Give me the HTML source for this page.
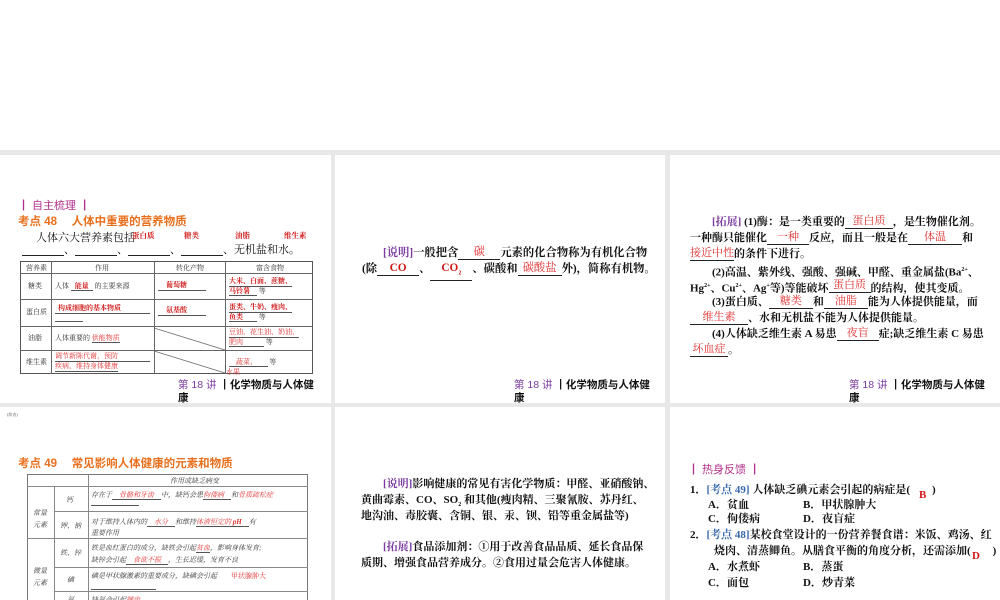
<!DOCTYPE html>
<html><head><meta charset="utf-8">
<style>
*{margin:0;padding:0;box-sizing:border-box}
body{width:1000px;height:600px;background:#fff;position:relative;overflow:hidden;font-family:"Liberation Serif","Noto Serif CJK SC",serif;color:#111}
.gray{position:absolute;background:#e8e8e8}
.s{position:absolute;background:#fff;overflow:hidden}
.a{position:absolute;white-space:nowrap}
.b{font-weight:bold}
.r{color:#e03030}
.rb{color:#d01818;font-weight:bold}
.pu{color:#7a3aa0}
.mg{color:#b0308c;font-family:"Liberation Sans","Noto Sans CJK SC",sans-serif}
.or{color:#e8701e;font-family:"Liberation Sans","Noto Sans CJK SC",sans-serif;font-weight:bold}
.t{font-size:11px;font-weight:bold;line-height:16px}
.u{display:inline-block;border-bottom:1px solid #222;text-align:center;line-height:14px;vertical-align:top}
.ft{font-size:10.5px;font-weight:bold;font-family:"Liberation Sans","Noto Sans CJK SC",sans-serif;line-height:13px}
.ln{position:absolute;background:#666}
.sm{font-size:7px;color:#333}
.ru{border-bottom:1px solid #555}
</style></head><body>
<div class="gray" style="left:0;top:150px;width:1000px;height:450px"></div>

<!-- slide 1 -->
<div class="s" style="left:0;top:155px;width:331px;height:248px">
 <div class="a mg" style="left:18px;top:42px;font-size:11px">┃ 自主梳理 ┃</div>
 <div class="a or" style="left:18px;top:58px;font-size:11.5px">考点 48　 人体中重要的营养物质</div>
 <div class="a" style="left:36px;top:74px;font-size:11px">人体六大营养素包括</div>
 <div class="a rb" style="left:132px;top:75px;font-size:7.5px">蛋白质</div>
 <div class="a rb" style="left:184px;top:75px;font-size:7.5px">糖类</div>
 <div class="a rb" style="left:235px;top:75px;font-size:7.5px">油脂</div>
 <div class="a rb" style="left:284px;top:75px;font-size:7.5px">维生素</div>
 <div class="a" style="left:22px;top:86px;font-size:11px"><span class="u" style="width:42px">&nbsp;</span>、<span class="u" style="width:42px">&nbsp;</span>、<span class="u" style="width:42px">&nbsp;</span>、<span class="u" style="width:42px">&nbsp;</span>、无机盐和水。</div>
 <div style="position:absolute;left:20px;top:106px;width:293px;height:113px;border:1px solid #555"></div>
 <div class="ln" style="left:51px;top:106px;width:1px;height:113px"></div>
 <div class="ln" style="left:154px;top:106px;width:1px;height:113px"></div>
 <div class="ln" style="left:225px;top:106px;width:1px;height:113px"></div>
 <div class="ln" style="left:20px;top:118px;width:293px;height:1px"></div>
 <div class="ln" style="left:20px;top:144px;width:293px;height:1px"></div>
 <div class="ln" style="left:20px;top:171px;width:293px;height:1px"></div>
 <div class="ln" style="left:20px;top:195px;width:293px;height:1px"></div>
 <svg style="position:absolute;left:154px;top:171px" width="72" height="48"><line x1="0" y1="2" x2="71" y2="24" stroke="#666" stroke-width=".7"/><line x1="0" y1="25" x2="71" y2="47" stroke="#666" stroke-width=".7"/></svg>
 <div class="a sm" style="left:26px;top:108px">营养素</div>
 <div class="a sm" style="left:95px;top:108px">作用</div>
 <div class="a sm" style="left:176px;top:108px">转化产物</div>
 <div class="a sm" style="left:256px;top:108px">富含食物</div>
 <div class="a sm" style="left:28px;top:126px">糖类</div>
 <div class="a sm" style="left:26px;top:152px">蛋白质</div>
 <div class="a sm" style="left:28px;top:178px">油脂</div>
 <div class="a sm" style="left:26px;top:202px">维生素</div>
 <div class="a sm" style="left:55px;top:126px">人体 <span class="ru rb" style="padding:0 4px">能量</span> 的主要来源</div>
 <div class="a rb" style="left:158px;top:125px;font-size:7px;border-bottom:1px solid #555;width:48px;padding-left:8px">葡萄糖</div>
 <div class="a rb" style="left:229px;top:121px;font-size:7px;border-bottom:1px solid #555">大米、白面、蔗糖、</div>
 <div class="a sm" style="left:229px;top:131px"><span class="rb ru">马铃薯　</span> 等</div>
 <div class="a rb" style="left:55px;top:148px;font-size:7px;border-bottom:1px solid #555;width:95px;padding-left:3px">构成细胞的基本物质</div>
 <div class="a" style="left:55px;top:159px;width:28px;border-bottom:1px solid #555;height:8px"></div>
 <div class="a rb" style="left:158px;top:150px;font-size:7px;border-bottom:1px solid #555;width:48px;padding-left:8px">氨基酸</div>
 <div class="a rb" style="left:229px;top:147px;font-size:7px;border-bottom:1px solid #555">蛋类、牛奶、瘦肉、</div>
 <div class="a sm" style="left:229px;top:157px"><span class="rb ru">鱼类　　</span> 等</div>
 <div class="a sm" style="left:55px;top:178px">人体重要的 <span class="r ru">供能物质</span></div>
 <div class="a r" style="left:229px;top:172px;font-size:7px;border-bottom:1px solid #555">豆油、花生油、奶油、</div>
 <div class="a sm" style="left:229px;top:182px"><span class="r ru">肥肉　　　</span> 等</div>
 <div class="a r" style="left:55px;top:196px;font-size:7px;border-bottom:1px solid #555;width:95px">调节新陈代谢，预防</div>
 <div class="a r" style="left:55px;top:206px;font-size:7px;border-bottom:1px solid #555">疾病，维持身体健康</div>
 <div class="a sm" style="left:229px;top:202px"><span class="r ru">　蔬菜、　　</span> 等</div>
 <div class="a r" style="left:226px;top:212px;font-size:7px">水果</div>
 <div class="a ft" style="left:178px;top:224px"><span class="pu" style="font-weight:normal">第 18 讲</span> ┃化学物质与人体健<br>康</div>
</div>

<!-- slide 2 -->
<div class="s" style="left:335px;top:155px;width:330px;height:248px">
 <div class="a t" style="left:48px;top:90px;font-size:11.3px"><span class="pu">[说明]</span>一般把含<span class="u r" style="width:42px;font-weight:normal">碳</span>元素的化合物称为有机化合物</div>
 <div class="a t" style="left:27px;top:106px;font-size:11.3px">(除<span class="u rb" style="width:42px">CO</span>、<span class="u rb" style="width:42px">CO<sub style="font-size:6px">2</sub></span>、碳酸和<span class="u r" style="width:44px;font-weight:normal">碳酸盐</span>外)，简称有机物。</div>
 <div class="a ft" style="left:179px;top:224px"><span class="pu" style="font-weight:normal">第 18 讲</span> ┃化学物质与人体健<br>康</div>
</div>

<!-- slide 3 -->
<div class="s" style="left:670px;top:155px;width:330px;height:248px">
 <div class="a t" style="left:42px;top:59px"><span class="pu">[拓展]</span> (1)酶：是一类重要的<span class="u r" style="width:48px;font-weight:normal">蛋白质</span>，是生物催化剂。</div>
 <div class="a t" style="left:20px;top:75px">一种酶只能催化<span class="u r" style="width:42px;font-weight:normal">一种</span>反应，而且一般是在<span class="u r" style="width:54px;font-weight:normal">体温</span>和</div>
 <div class="a t" style="left:20px;top:91px"><span class="u r" style="font-weight:normal">接近中性</span>的条件下进行。</div>
 <div class="a t" style="left:42px;top:107px">(2)高温、紫外线、强酸、强碱、甲醛、重金属盐(Ba<sup style="font-size:6px">2+</sup>、</div>
 <div class="a t" style="left:20px;top:123px">Hg<sup style="font-size:6px">2+</sup>、Cu<sup style="font-size:6px">2+</sup>、Ag<sup style="font-size:6px">+</sup>等)等能破坏<span class="u r" style="width:42px;font-weight:normal">蛋白质</span>的结构，使其变质。</div>
 <div class="a t" style="left:42px;top:139px">(3)蛋白质、<span class="u r" style="width:44px;font-weight:normal">糖类</span>和<span class="u r" style="width:44px;font-weight:normal">油脂</span>能为人体提供能量，而</div>
 <div class="a t" style="left:20px;top:155px"><span class="u r" style="width:58px;font-weight:normal">维生素</span>、水和无机盐不能为人体提供能量。</div>
 <div class="a t" style="left:42px;top:171px">(4)人体缺乏维生素 A 易患<span class="u r" style="width:42px;font-weight:normal">夜盲</span>症;缺乏维生素 C 易患</div>
 <div class="a t" style="left:20px;top:187px"><span class="u r" style="width:38px;font-weight:normal">坏血症</span>。</div>
 <div class="a ft" style="left:179px;top:224px"><span class="pu" style="font-weight:normal">第 18 讲</span> ┃化学物质与人体健<br>康</div>
</div>

<!-- slide 4 -->
<div class="s" style="left:0;top:407px;width:331px;height:193px">
 <div class="a" style="left:7px;top:5px;font-size:4px;color:#555">(续表)</div>
 <div class="a or" style="left:18px;top:48px;font-size:11.5px">考点 49　 常见影响人体健康的元素和物质</div>
 <div style="position:absolute;left:27px;top:67px;width:281px;height:140px;border:1px solid #777"></div>
 <div class="ln" style="left:54px;top:79px;width:1px;height:120px;background:#888"></div>
 <div class="ln" style="left:88px;top:67px;width:1px;height:130px;background:#888"></div>
 <div class="ln" style="left:27px;top:79px;width:281px;height:1px;background:#888"></div>
 <div class="ln" style="left:54px;top:104px;width:254px;height:1px;background:#888"></div>
 <div class="ln" style="left:27px;top:131px;width:281px;height:1px;background:#888"></div>
 <div class="ln" style="left:54px;top:160px;width:254px;height:1px;background:#888"></div>
 <div class="ln" style="left:54px;top:184px;width:254px;height:1px;background:#888"></div>
 <div class="a sm" style="left:170px;top:69px;font-style:italic">作用或缺乏病变</div>
 <div class="a sm" style="left:33px;top:100px;font-style:italic;line-height:12px">常量<br>元素</div>
 <div class="a sm" style="left:33px;top:158px;font-style:italic;line-height:12px">微量<br>元素</div>
 <div class="a sm" style="left:66px;top:88px;font-style:italic">钙</div>
 <div class="a sm" style="left:60px;top:114px;font-style:italic">钾、钠</div>
 <div class="a sm" style="left:60px;top:141px;font-style:italic">铁、锌</div>
 <div class="a sm" style="left:67px;top:168px;font-style:italic">碘</div>
 <div class="a sm" style="left:67px;top:188px;font-style:italic">氟</div>
 <div class="a sm" style="left:91px;top:83px;font-style:italic">存在于<span class="r ru">　骨骼和牙齿　</span>中，缺钙会患<span class="r ru">佝偻病　</span>和<span class="r">骨质疏松症</span></div>
 <div class="a" style="left:91px;top:91px;width:48px;border-bottom:1px solid #555;height:8px"></div>
 <div class="a sm" style="left:91px;top:110px;font-style:italic">对于维持人体内的<span class="r ru">　水分　</span>和维持<span class="r ru">体液恒定的 <b>pH</b>　</span>有</div>
 <div class="a sm" style="left:91px;top:121px;font-style:italic">重要作用</div>
 <div class="a sm" style="left:91px;top:136px;font-style:italic">铁是血红蛋白的成分，缺铁会引起<span class="r ru">贫血</span>，影响身体发育;</div>
 <div class="a sm" style="left:91px;top:148px;font-style:italic">缺锌会引起<span class="r ru">　食欲不振　</span>，生长迟缓，发育不良</div>
 <div class="a sm" style="left:91px;top:164px;font-style:italic">碘是甲状腺激素的重要成分，缺碘会引起　　<span class="r" style="font-style:normal">甲状腺肿大</span></div>
 <div class="a" style="left:91px;top:175px;width:65px;border-bottom:1px solid #555;height:8px"></div>
 <div class="a sm" style="left:91px;top:188px;font-style:italic">缺氟会引起<span class="r">龋齿</span></div>
</div>

<!-- slide 5 -->
<div class="s" style="left:335px;top:407px;width:330px;height:193px">
 <div class="a t" style="left:48px;top:69px"><span class="pu">[说明]</span>影响健康的常见有害化学物质：甲醛、亚硝酸钠、</div>
 <div class="a t" style="left:26px;top:85px">黄曲霉素、CO、SO<sub style="font-size:6px">2</sub> 和其他(瘦肉精、三聚氰胺、苏丹红、</div>
 <div class="a t" style="left:26px;top:101px">地沟油、毒胶囊、含铜、银、汞、钡、铅等重金属盐等)</div>
 <div class="a t" style="left:48px;top:132px"><span class="pu">[拓展]</span>食品添加剂：①用于改善食品品质、延长食品保</div>
 <div class="a t" style="left:26px;top:148px">质期、增强食品营养成分。②食用过量会危害人体健康。</div>
</div>

<!-- slide 6 -->
<div class="s" style="left:670px;top:407px;width:330px;height:193px">
 <div class="a mg" style="left:18px;top:54px;font-size:11px">┃ 热身反馈 ┃</div>
 <div class="a t" style="left:20px;top:75px">1．<span style="color:#3a6ab0">[考点 49]</span> 人体缺乏碘元素会引起的病症是(　　)</div>
 <div class="a rb" style="left:249px;top:82px;font-size:11px">B</div>
 <div class="a t" style="left:38px;top:90px">A．贫血</div><div class="a t" style="left:133px;top:90px">B．甲状腺肿大</div>
 <div class="a t" style="left:38px;top:104px">C．佝偻病</div><div class="a t" style="left:133px;top:104px">D．夜盲症</div>
 <div class="a t" style="left:20px;top:120px">2．<span style="color:#3a6ab0">[考点 48]</span>某校食堂设计的一份营养餐食谱：米饭、鸡汤、红</div>
 <div class="a t" style="left:44px;top:136px">烧肉、清蒸鲫鱼。从膳食平衡的角度分析，还需添加(　　)</div>
 <div class="a rb" style="left:302px;top:143px;font-size:11px">D</div>
 <div class="a t" style="left:38px;top:152px">A．水煮虾</div><div class="a t" style="left:133px;top:152px">B．蒸蛋</div>
 <div class="a t" style="left:38px;top:168px">C．面包</div><div class="a t" style="left:133px;top:168px">D．炒青菜</div>
</div>
</body></html>
